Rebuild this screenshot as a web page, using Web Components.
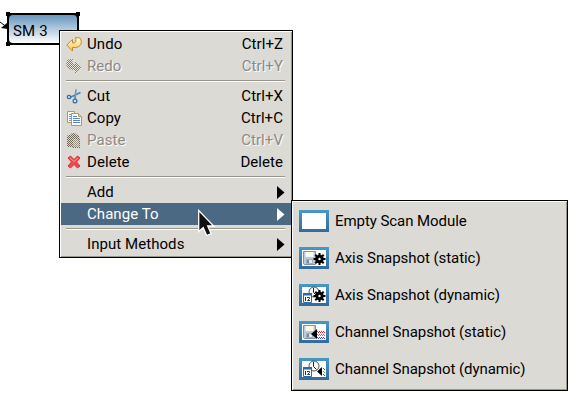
<!DOCTYPE html>
<html lang="en"><head><meta charset="utf-8"><title>Context menu</title>
<style>
html,body{margin:0;height:100%;background:#fff;overflow:hidden}
body{font:400 15px Roboto,"Liberation Sans",sans-serif;color:#000}
</style></head><body>
<scan-canvas>
 <scan-node slot="node">SM 3</scan-node>
 <ui-menu slot="menu" class="main">
  <menu-row icon="undo" key="Ctrl+Z">Undo</menu-row>
  <menu-row icon="redo" key="Ctrl+Y" disabled>Redo</menu-row>
  <menu-sep></menu-sep>
  <menu-row icon="cut" key="Ctrl+X">Cut</menu-row>
  <menu-row icon="copy" key="Ctrl+C">Copy</menu-row>
  <menu-row icon="paste" key="Ctrl+V" disabled>Paste</menu-row>
  <menu-row icon="del" key="Delete">Delete</menu-row>
  <menu-sep></menu-sep>
  <menu-row more>Add</menu-row>
  <menu-row more active>Change To</menu-row>
  <menu-sep></menu-sep>
  <menu-row more>Input Methods</menu-row>
 </ui-menu>
 <ui-menu slot="sub" class="sub">
  <menu-row big icon="empty">Empty Scan Module</menu-row>
  <menu-row big icon="axisS">Axis Snapshot (static)</menu-row>
  <menu-row big icon="axisD">Axis Snapshot (dynamic)</menu-row>
  <menu-row big icon="chanS">Channel Snapshot (static)</menu-row>
  <menu-row big icon="chanD">Channel Snapshot (dynamic)</menu-row>
 </ui-menu>
</scan-canvas>
<script>
const frame=s=>`<svg width="30" height="22" viewBox="0 0 30 22"><defs><linearGradient id="f" x2="0" y2="1"><stop stop-color="#4799c8"/><stop offset="1" stop-color="#336a9c"/></linearGradient></defs><path fill="url(#f)" d="M0 0h30v22H0z"/><path fill="#fff" d="M3 3h24v16H3z"/>${s}</svg>`;
const gear=`<g transform="translate(20.500 12)"><circle r="4.200" fill="#000"/><path d="M0-6V6M-6 0H6M-4.200-4.200L4.200 4.200M4.200-4.200L-4.200 4.200" stroke="#000" stroke-width="2"/><circle r="1.200" fill="#fff"/></g>`;
const disk=`<path d="M4.500 4.500h12v13h-11l-1-1z" fill="#b9cbdd" stroke="#8291a3"/><path d="M6.500 5h8v5h-8z" fill="#fdfbe9"/><path d="M7.500 12.500h6v4h-6z" fill="#e8e8e6" stroke="#9ba3aa" stroke-width=".8"/><path d="M8 13h2v3H8z" fill="#7287a0"/>`;
const clock=`<circle cx="15" cy="8" r="5" fill="#f8f8f8" stroke="#555"/><path d="M14.500 4v4.500l3 3" stroke="#222" fill="none"/><path d="M4.500 9.500h8v9h-8z" fill="#fff" stroke="#286d9e"/><path d="M4 9h9v2.500H4z" fill="#286d9e"/><path d="M6.500 13v4M8 13.500h2.500v1.200L8.500 16.500H11" stroke="#123e68" fill="none"/>`;
const left=`<path d="M12 13l6-5v10z" fill="#000"/>`;
const wave=(x,n)=>`<g shape-rendering="crispEdges">${['#f02030','#20c838','#4040f0'].map((c,i)=>Array.from({length:n},(_,k)=>`<rect x="${x+k}" y="${10+i*3+(k%2)}" width="1" height="1" fill="${c}"/>`).join('')).join('')}</g>`;
const arrowPath='M.8 9L6.500 3.500V7h1.500c2-.5 2.500-3 1.500-5.500l4.500.500c3 5 .5 9-4.500 9.500h-3v3.500z';
const ICONS={
undo:`<svg width="16" height="16"><defs><linearGradient id="a" x2="0" y2="1"><stop stop-color="#fffbe0"/><stop offset="1" stop-color="#f8c650"/></linearGradient></defs><path d="${arrowPath}" fill="url(#a)" stroke="#c58b22"/></svg>`,
redo:`<svg width="16" height="16"><defs><pattern id="p" width="2" height="2" patternUnits="userSpaceOnUse"><path fill="#ece8dc" d="M0 0h2v2H0z"/><path fill="#8d7a4e" d="M0 0h1v1H0zM1 1h1v1H1z"/></pattern></defs><path transform="matrix(-1 0 0 1 16 0)" d="${arrowPath}" fill="url(#p)" stroke="url(#p)"/></svg>`,
cut:`<svg width="16" height="16" fill="none"><path d="M10 1.500L9 11M14.500 4.500L4 9.500" stroke="#557fae" stroke-width="1.600"/><path d="M10 2v7" stroke="#a9c4df" stroke-width=".7"/><circle cx="3" cy="9" r="1.700" fill="#cfe3f5" stroke="#2e6ca8" stroke-width="1.200"/><circle cx="9" cy="13" r="1.900" fill="#cfe3f5" stroke="#2e6ca8" stroke-width="1.200"/></svg>`,
copy:`<svg width="16" height="16"><path d="M1.500 1.500h7v11h-7z" fill="#fffbe5" stroke="#b39a55"/><path d="M3 4.500h2M3 6.500h2M3 8.500h2M3 10.500h2" stroke="#7898c5"/><path d="M5.500 3.500h7l3 3v9h-10z" fill="#f8fbff" stroke="#b39a55"/><path d="M12.500 3.500v3h3" fill="#e5d69b" stroke="#b39a55"/><path d="M7 6.500h4M7 8.500h7M7 10.500h7M7 12.500h7" stroke="#5d86c2"/></svg>`,
paste:`<svg width="16" height="16"><defs><pattern id="q" width="2" height="2" patternUnits="userSpaceOnUse"><path fill="#dcdad5" d="M0 0h2v2H0z"/><path fill="#6e6655" d="M0 0h1v1H0zM1 1h1v1H1z"/></pattern></defs><path d="M2 3h2l2-2h3l2 2h2v2l1 2v9H6v-1H1V4z" fill="url(#q)"/><path d="M7 7h4l2 2v6H7z" fill="#dcdad5" opacity=".4"/></svg>`,
del:`<svg width="16" height="16"><path d="M2 4l2.500-2L8 5.500 11.500 2 14 4l-3.500 4 3.500 4-2.500 2L8 10.500 4.500 14 2 12l3.500-4z" fill="#f0484c" stroke="#d8323a"/><path d="M4 4l4 3.500L12 4" stroke="#f99" fill="none"/></svg>`,
empty:frame(''),
axisS:frame(disk+gear),
axisD:frame(clock+gear),
chanS:frame(disk+left+wave(18,8)),
chanD:frame(clock+`<path d="M18 13.500l5-4.500v9z" fill="#000"/>`+wave(24,2))
};
const def=(n,html)=>customElements.define(n,class extends HTMLElement{connectedCallback(){if(this.shadowRoot)return;this.attachShadow({mode:'open'}).innerHTML=typeof html==='function'?html(this):html}});
def('scan-canvas',`<style>:host{display:block;position:relative;width:579px;height:403px;overflow:hidden}
::slotted(*){position:absolute}::slotted(scan-node){left:0;top:8px}
::slotted(.main){left:59px;top:30px;width:234px;height:228px}::slotted(.sub){left:291px;top:200px;width:277px;height:191px}
svg{position:absolute;left:197px;top:209px;z-index:3}</style>
<slot name="node"></slot><slot name="menu"></slot><slot name="sub"></slot>
<svg width="19" height="28"><path d="M1.700 1.500v21l4.500-4 3.500 8 4.500-1.800-3.500-7.700h6z" fill="#111" stroke="#fff" stroke-width="1.300"/></svg>`);
def('scan-node',`<style>:host{display:block;width:85px;height:40px}svg{display:block}.t{position:absolute;left:13px;top:14px;line-height:18px;letter-spacing:.15px}</style>
<svg width="85" height="40"><defs><linearGradient id="n" x2="0" y2="1"><stop stop-color="#6795bf"/><stop offset="1" stop-color="#fff"/></linearGradient></defs>
<path d="M0 14l8 6" stroke="#000"/><path d="M7.500 21V14.500L1 20z" fill="#000"/>
<rect x="8" y="6" width="70" height="30" fill="#000"/><rect x="9" y="7" width="68" height="28" rx="4" fill="url(#n)"/><rect x="8" y="6" width="70" height="30" fill="none" stroke="#000" stroke-width="2"/>
<path d="M6 4h4v4H6zM76 4h4v4h-4zM6 34h4v4H6z"/></svg><span class="t"><slot></slot></span>`);
def('ui-menu',`<style>:host{display:flex;flex-direction:column;box-sizing:border-box;background:#dcdad5;border:1px solid #000;box-shadow:inset 1px 1px #fff,inset -1px -1px #98958d;padding:2px 1px}:host(.sub){padding-top:1px}</style><slot></slot>`);
def('menu-sep',`<style>:host{display:block;height:8px;box-sizing:border-box;padding:3px 6px 0 5px}i{display:block;height:1px;background:#98958d;border-bottom:1px solid #fff}</style><i></i>`);
def('menu-row',e=>`<style>:host{display:flex;align-items:center;height:22px;box-sizing:border-box;padding:0 8px 0 5px;line-height:22px;letter-spacing:.06px;white-space:pre}
:host([big]){height:37px;padding-left:6px;letter-spacing:-.06px}:host([active]){background:#4b6983;color:#fff}:host([disabled]){color:#8b8985;text-shadow:1px 1px #fff}
.i{width:16px;height:16px;margin-right:5px;flex:none}:host([big]) .i{width:30px;height:22px;margin-right:6px}svg{display:block}.l{flex:1}.m{margin-right:-2px}</style>
<span class="i">${ICONS[e.getAttribute('icon')]||''}</span><span class="l"><slot></slot></span>${e.hasAttribute('key')?`<span class="k">${e.getAttribute('key')}</span>`:''}${e.hasAttribute('more')?'<svg class="m" width="8" height="13"><path d="M0 0l7.500 6.500L0 13z" fill="currentColor"/></svg>':''}`);
</script></body></html>
